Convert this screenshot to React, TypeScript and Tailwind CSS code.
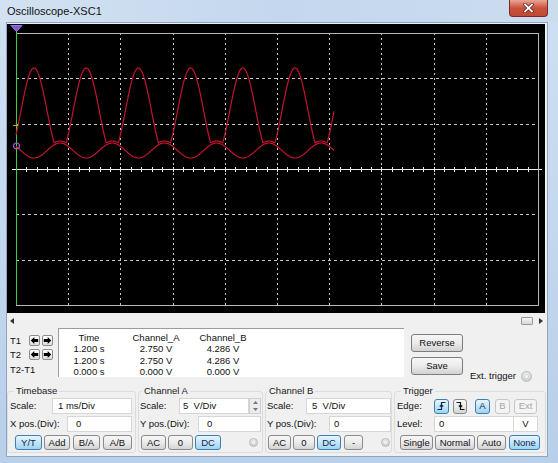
import React from "react";

const RED = "#c4142d";

function buildTraces() {
    const up: string[] = [];
    const lo: string[] = [];
    for (let x = 9; x <= 327; x += 0.5) {
        const th = (2 * Math.PI * (x - 27)) / 52.2;
        const l = 126.5 + 7.5 * Math.cos(th);
        const h = Math.max(0, (Math.cos(th) + 0.75) / 1.75);
        const u = l - 2 - 88 * h;
        up.push(`${x === 9 ? "M" : "L"}${x.toFixed(1)},${u.toFixed(2)}`);
        lo.push(`${x === 9 ? "M" : "L"}${x.toFixed(1)},${l.toFixed(2)}`);
    }
    return { up: up.join(" "), lo: lo.join(" ") };
}

function Scope() {
    const x0 = 9, x1 = 531, y0 = 9, y1 = 281;
    const dx = (x1 - x0) / 10;
    const dy = (y1 - y0) / 6;
    const cy = Math.round(y0 + dy * 3) + 0.5;
    const { up, lo } = buildTraces();
    const ticks: number[] = [];
    for (let i = 1; i < 50; i++) ticks.push(Math.round(x0 + (dx / 5) * i) + 0.5);

    return (
        <svg width="538" height="289" className="block bg-black">
            {[1, 2, 3, 4, 5, 6, 7, 8, 9].map((k) => {
                const x = Math.round(x0 + dx * k) + 0.5;
                return <line key={k} x1={x} y1={y0} x2={x} y2={y1} stroke="#c8c8c8" strokeDasharray="2 3" />;
            })}
            {[1, 2, 4, 5].map((k) => {
                const y = Math.round(y0 + dy * k) + 0.5;
                return <line key={k} x1={x0} y1={y} x2={x1} y2={y} stroke="#c8c8c8" strokeDasharray="3 3" />;
            })}
            <line x1={5} y1={cy} x2={535} y2={cy} stroke="#f2f2f2" />
            {ticks.map((t) => (
                <line key={t} x1={t} y1={cy - 2.5} x2={t} y2={cy + 2.5} stroke="#e8e8e8" />
            ))}
            <rect x={x0 + 0.5} y={y0 + 0.5} width={x1 - x0} height={y1 - y0} fill="none" stroke="#b8b8b8" />
            <line x1={9.5} y1={6} x2={9.5} y2={y1} stroke="#37d23a" />
            <path d={lo} fill="none" stroke={RED} strokeWidth="1.2" />
            <path d={up} fill="none" stroke={RED} strokeWidth="1.2" />
            <line x1={6} y1={101.5} x2={11} y2={101.5} stroke="#e0a020" />
            <circle cx={9.5} cy={122} r={3} fill="none" stroke="#b050d0" strokeWidth="1.2" />
            <path d="M4 1.5 L15 1.5 L9.5 7.5 Z" fill="#a04cc8" stroke="#6f8cf2" strokeWidth="1" />
        </svg>
    );
}

function Btn({ children, w, active, disabled, className = "" }: { children: React.ReactNode; w: string; active?: boolean; disabled?: boolean; className?: string }) {
    const look = disabled
        ? "border-[#c6c6c6] bg-[#f4f4f4] text-[#a6a6a6]"
        : active
            ? "border-[#3c7fb1] bg-linear-to-b from-[#e8f5fd] via-[#c4e4f7] to-[#9fd3f2] text-[#0b2a55]"
            : "border-[#8a8a8a] bg-linear-to-b from-[#f7f7f7] via-[#ebebeb] to-[#d4d4d4] text-[#111]";
    return (
        <div className={`${w} h-[15px] shrink-0 flex items-center justify-center rounded-[3px] border leading-none ${look} ${className}`}>
            {children}
        </div>
    );
}

function Field({ w, children, className = "" }: { w: string; children?: React.ReactNode; className?: string }) {
    return (
        <div className={`${w} h-[16px] shrink-0 flex items-center bg-white border border-[#d6d6d6] leading-none ${className}`}>
            {children}
        </div>
    );
}

function Radio({ size = "w-[9px] h-[9px]" }: { size?: string }) {
    return (
        <div className={`${size} rounded-full border border-[#b9b9b9] bg-linear-to-b from-[#e9e9e9] to-[#cfcfcf] flex items-center justify-center`}>
            <div className="w-[3px] h-[3px] rounded-full bg-[#f4f4f4]" />
        </div>
    );
}

function ArrowBtn({ dir }: { dir: "l" | "r" }) {
    return (
        <div className="w-[11px] h-[11px] rounded-[2px] border border-[#8c8c8c] bg-linear-to-b from-white to-[#dedede] flex items-center justify-center">
            <svg width="9" height="9" viewBox="0 0 9 9">
                <path
                    d={dir === "l" ? "M0.8 4.5 L4.3 1 L4.3 3.1 L8.2 3.1 L8.2 5.9 L4.3 5.9 L4.3 8 Z" : "M8.2 4.5 L4.7 1 L4.7 3.1 L0.8 3.1 L0.8 5.9 L4.7 5.9 L4.7 8 Z"}
                    fill="#000"
                />
            </svg>
        </div>
    );
}

function Group({ title, w, children, legendPad }: { title: string; w: string; children: React.ReactNode; legendPad: string }) {
    return (
        <fieldset className={`${w} shrink-0 border border-[#d8dde2] rounded-[3px] pb-[2px]`}>
            <legend className={`${legendPad} pr-[2px] text-[9.5px] leading-[10px] text-[#1a1a1a]`}>{title}</legend>
            {children}
        </fieldset>
    );
}

export default function App() {
    return (
        <div className="w-[558px] h-[463px] flex flex-col overflow-hidden bg-linear-to-b from-[#cfe0f3] to-[#b8cfea] font-['Liberation_Sans',Arial,sans-serif] text-[9.5px] text-[#111]">
            {/* title bar */}
            <div className="h-[22px] shrink-0 flex items-start justify-between bg-linear-to-r from-[#d3e2f2] via-[#c4d7ee] to-[#cbdcef]">
                <span className="pl-[7px] pt-[4px] text-[11px] leading-[14px] text-[#111]">Oscilloscope-XSC1</span>
                <div className="mr-[10px] w-[39px] h-[17px] rounded-b-[4px] border border-t-0 border-[#7a2a1e] bg-linear-to-b from-[#e9a596] via-[#c9503c] to-[#c24a35] flex items-center justify-center">
                    <svg width="11" height="10" viewBox="0 0 11 10">
                        <path d="M2 1.5 L9 8.5 M9 1.5 L2 8.5" stroke="#5a1a10" strokeWidth="3.2" strokeLinecap="square" />
                        <path d="M2 1.5 L9 8.5 M9 1.5 L2 8.5" stroke="#fff" strokeWidth="1.8" strokeLinecap="square" />
                    </svg>
                </div>
            </div>

            {/* client */}
            <div className="flex-1 ml-[6px] mr-[10px] mb-[6px] border border-[#90a6c0] bg-[#f0f0f0] flex flex-col">
                <div className="mt-[1px]">
                    <Scope />
                </div>

                {/* scroll bar */}
                <div className="h-[15px] flex items-center justify-between pl-[3px] pr-[4px]">
                    <svg width="4" height="6" viewBox="0 0 4 6"><path d="M4 0 L0 3 L4 6 Z" fill="#333" /></svg>
                    <div className="flex items-center gap-[6px]">
                        <div className="w-[12px] h-[8px] rounded-[1px] border border-[#9a9a9a] bg-linear-to-b from-[#f6f6f6] to-[#d6d6d6]" />
                        <svg width="4" height="6" viewBox="0 0 4 6"><path d="M0 0 L4 3 L0 6 Z" fill="#333" /></svg>
                    </div>
                </div>

                {/* readout */}
                <div className="h-[53px] flex">
                    <div className="w-[51px] pt-[7px] text-[9.5px] leading-none">
                        <div className="h-[11px] flex items-center">
                            <span className="w-[22px] pl-[3px]">T1</span>
                            <div className="flex gap-[2px]"><ArrowBtn dir="l" /><ArrowBtn dir="r" /></div>
                        </div>
                        <div className="h-[11px] mt-[3px] flex items-center">
                            <span className="w-[22px] pl-[3px]">T2</span>
                            <div className="flex gap-[2px]"><ArrowBtn dir="l" /><ArrowBtn dir="r" /></div>
                        </div>
                        <div className="mt-[5px] pl-[3px]">T2-T1</div>
                    </div>
                    <div className="w-[346px] h-[49px] bg-white border-t border-l border-[#9c9c9c] pt-[3px] leading-[11.3px] text-[9.5px]">
                        <div className="grid grid-cols-[60px_74px_60px] text-center">
                            <span>Time</span><span>Channel_A</span><span>Channel_B</span>
                            <span>1.200 s</span><span>2.750 V</span><span>4.286 V</span>
                            <span>1.200 s</span><span>2.750 V</span><span>4.286 V</span>
                            <span>0.000 s</span><span>0.000 V</span><span>0.000 V</span>
                        </div>
                    </div>
                    <div className="ml-[7px] pt-[6px] flex flex-col gap-[5px]">
                        <div className="w-[52px] h-[18px] rounded-[3px] border border-[#7d7d7d] bg-linear-to-b from-[#f7f7f7] via-[#ebebeb] to-[#d2d2d2] flex items-center justify-center">Reverse</div>
                        <div className="w-[52px] h-[18px] rounded-[3px] border border-[#7d7d7d] bg-linear-to-b from-[#f7f7f7] via-[#ebebeb] to-[#d2d2d2] flex items-center justify-center">Save</div>
                    </div>
                    <div className="ml-[7px] pt-[43px] flex items-center gap-[5px] h-[53px]">
                        <span className="leading-none">Ext. trigger</span>
                        <Radio size="w-[11px] h-[11px]" />
                    </div>
                </div>

                {/* controls */}
                <div className="flex gap-[2px] mt-[5px]">
                    <Group title="Timebase" w="w-[129px]" legendPad="ml-[6px] pl-[2px]">
                        <div className="mt-[2px] pl-[2px]">
                            <div className="flex items-center">
                                <span className="w-[42px]">Scale:</span>
                                <Field w="w-[80px]" className="pl-[5px]">1 ms/Div</Field>
                            </div>
                            <div className="flex items-center mt-[2px]">
                                <span className="w-[57px]">X pos.(Div):</span>
                                <Field w="w-[65px]" className="pl-[8px]">0</Field>
                            </div>
                            <div className="flex mt-[3px] pl-[5px]">
                                <Btn w="w-[27px]" active>Y/T</Btn>
                                <Btn w="w-[26px]" className="ml-[2px]">Add</Btn>
                                <Btn w="w-[27px]" className="ml-[3px]">B/A</Btn>
                                <Btn w="w-[29px]" className="ml-[3px]">A/B</Btn>
                            </div>
                        </div>
                    </Group>
                    <Group title="Channel A" w="w-[125px]" legendPad="ml-[3px] pl-[2px]">
                        <div className="mt-[2px] pl-[1px]">
                            <div className="flex items-center">
                                <span className="w-[39px]">Scale:</span>
                                <Field w="w-[70px]" className="pl-[3px]">5&nbsp;&nbsp;V/Div</Field>
                                <div className="w-[12px] h-[16px] border border-[#cfcfcf] bg-[#ececec] flex flex-col items-center justify-around">
                                    <svg width="5" height="3" viewBox="0 0 5 3"><path d="M0 3 L2.5 0 L5 3 Z" fill="#777" /></svg>
                                    <svg width="5" height="3" viewBox="0 0 5 3"><path d="M0 0 L2.5 3 L5 0 Z" fill="#777" /></svg>
                                </div>
                            </div>
                            <div className="flex items-center mt-[2px]">
                                <span className="w-[58px]">Y pos.(Div):</span>
                                <Field w="w-[63px]" className="pl-[8px]">0</Field>
                            </div>
                            <div className="flex items-center mt-[3px] pl-[1px]">
                                <Btn w="w-[25px]">AC</Btn>
                                <Btn w="w-[25px]" className="ml-[2px]">0</Btn>
                                <Btn w="w-[26px]" className="ml-[2px]" active>DC</Btn>
                                <div className="ml-[28px]"><Radio /></div>
                            </div>
                        </div>
                    </Group>
                    <Group title="Channel B" w="w-[127px]" legendPad="ml-[1px] pl-[2px]">
                        <div className="mt-[2px] pl-[1px]">
                            <div className="flex items-center">
                                <span className="w-[39px]">Scale:</span>
                                <Field w="w-[85px]" className="pl-[5px]">5&nbsp;&nbsp;V/Div</Field>
                            </div>
                            <div className="flex items-center mt-[2px]">
                                <span className="w-[62px]">Y pos.(Div):</span>
                                <Field w="w-[62px]" className="pl-[4px]">0</Field>
                            </div>
                            <div className="flex items-center mt-[3px] pl-[1px]">
                                <Btn w="w-[23px]">AC</Btn>
                                <Btn w="w-[22px]" className="ml-[2px]">0</Btn>
                                <Btn w="w-[24px]" className="ml-[2px]" active>DC</Btn>
                                <Btn w="w-[19px]" className="ml-[3px]">-</Btn>
                                <div className="ml-[18px]"><Radio /></div>
                            </div>
                        </div>
                    </Group>
                    <Group title="Trigger" w="w-[152px]" legendPad="ml-[6px] pl-[2px]">
                        <div className="mt-[2px] pl-[2px]">
                            <div className="flex items-center h-[16px]">
                                <span className="w-[37px]">Edge:</span>
                                <Btn w="w-[15px]" active>
                                    <svg width="9" height="10" viewBox="0 0 9 10">
                                        <path d="M0.5 8.5 H4.5 V1.5 H8.5 M2.8 5.5 L4.5 3.8 L6.2 5.5" fill="none" stroke="#0b2a55" strokeWidth="1.2" />
                                    </svg>
                                </Btn>
                                <Btn w="w-[14px]" className="ml-[4px]">
                                    <svg width="9" height="10" viewBox="0 0 9 10">
                                        <path d="M0.5 1.5 H4.5 V8.5 H8.5 M2.8 4.5 L4.5 6.2 L6.2 4.5" fill="none" stroke="#111" strokeWidth="1.2" />
                                    </svg>
                                </Btn>
                                <Btn w="w-[15px]" className="ml-[8px]" active>A</Btn>
                                <Btn w="w-[15px]" className="ml-[5px]" disabled>B</Btn>
                                <Btn w="w-[23px]" className="ml-[4px]" disabled>Ext</Btn>
                            </div>
                            <div className="flex items-center mt-[2px]">
                                <span className="w-[37px]">Level:</span>
                                <Field w="w-[80px]" className="pl-[4px]">0</Field>
                                <Field w="w-[24px]" className="justify-center border-l-0">V</Field>
                            </div>
                            <div className="flex mt-[3px] pl-[3px]">
                                <Btn w="w-[33px]">Single</Btn>
                                <Btn w="w-[40px]" className="ml-[2px]">Normal</Btn>
                                <Btn w="w-[29px]" className="ml-[2px]">Auto</Btn>
                                <Btn w="w-[31px]" className="ml-[3px]" active>None</Btn>
                            </div>
                        </div>
                    </Group>
                </div>
            </div>
        </div>
    );
}
